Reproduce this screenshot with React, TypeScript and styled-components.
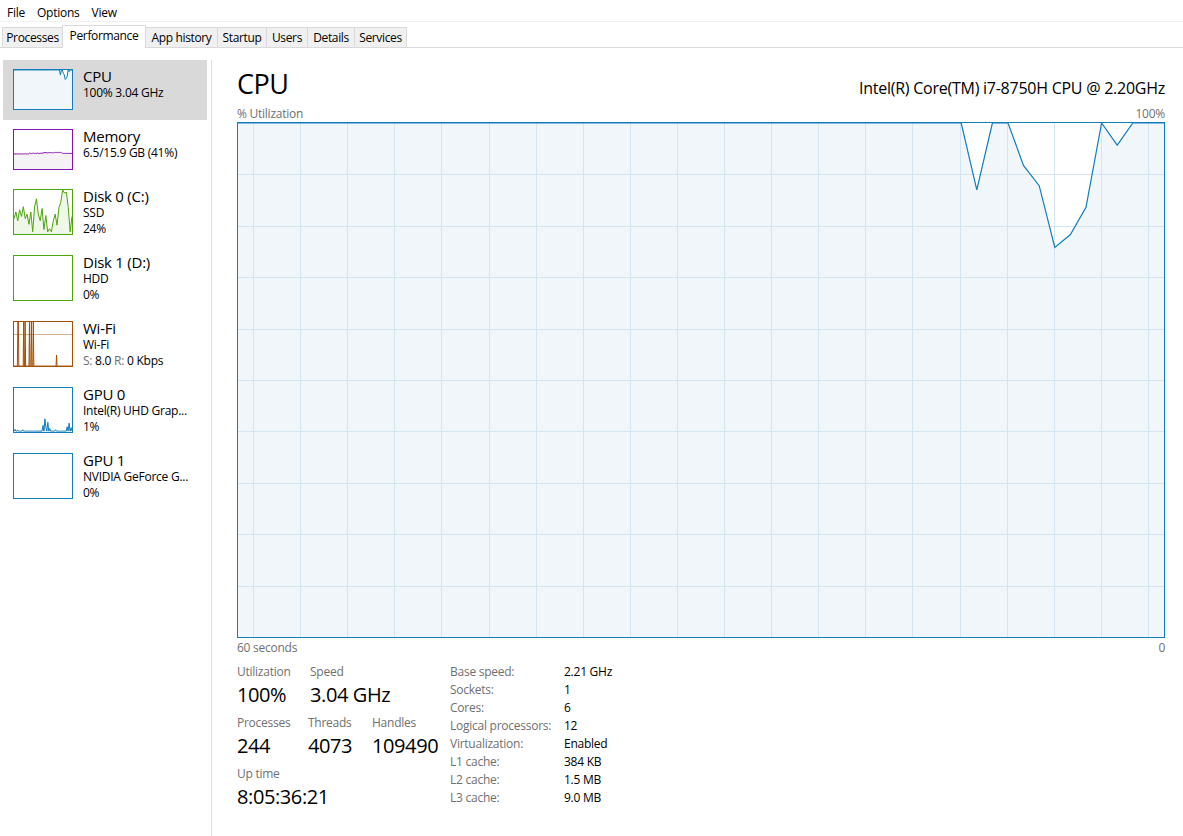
import React from "react";
import styled, { createGlobalStyle } from "styled-components";

const FONT = `"Segoe UI", "Open Sans", "Noto Sans", sans-serif`;

const GlobalStyle = createGlobalStyle`
  html, body { margin: 0; padding: 0; background: #fff; }
  body { font-family: ${FONT}; color: #000; letter-spacing: -0.25px; }
  * { box-sizing: border-box; }
`;

type Palette = { border: string; fill: string; line: string };

const BLUE: Palette = { border: "#117dbb", fill: "#f1f6fa", line: "#117dbb" };
const PURPLE: Palette = { border: "#8b12ae", fill: "#f4f2f4", line: "#8b12ae" };
const GREEN: Palette = { border: "#4da60c", fill: "#eff7e9", line: "#4da60c" };
const ORANGE: Palette = { border: "#a74f01", fill: "#fcf3eb", line: "#a74f01" };

// ---- data ----

const cpuVals = (() => {
  const v = new Array(61).fill(1);
  const dips: Record<number, number> = { 3: 0.957, 5: 0.836, 6: 0.783, 7: 0.758, 8: 0.878, 9: 0.917, 12: 0.87 };
  Object.entries(dips).forEach(([k, val]) => (v[60 - Number(k)] = val));
  return v;
})();

const memVals = Array.from({ length: 61 }, (_, i) => {
  if (i < 16) return 0.385 + (i % 3 === 0 ? 0.005 : 0);
  if (i < 30) return 0.4 + (i % 4 === 0 ? 0.01 : 0);
  if (i < 42) return 0.42 - (i % 5 === 0 ? 0.01 : 0);
  if (i < 50) return 0.425;
  return 0.4;
});

const disk0Vals = [
  0.35, 0.5, 0.3, 0.55, 0.4, 0.62, 0.35, 0.45, 0.22, 0.5, 0.05, 0.62, 0.8, 0.45, 0.3, 0.58, 0.1, 0.42, 0.05,
  0.12, 0.05, 0.3, 0.45, 0.2, 0.6, 0.72, 1.0, 0.93, 0.95, 0.6, 0.05, 0.4,
];

const wifiVals = Array.from({ length: 121 }, (_, i) => {
  const spikes: Record<number, number> = { 8: 1, 9: 1, 20: 1, 23: 1, 32: 1, 36: 1, 40: 1, 88: 0.25 };
  return spikes[i] ?? 0;
});

const gpu0Vals = Array.from({ length: 61 }, (_, i) => {
  const spikes: Record<number, number> = {
    1: 0.06, 4: 0.04, 9: 0.05, 30: 0.15, 32: 0.3, 33: 0.1, 35: 0.22, 37: 0.08, 43: 0.05, 55: 0.12, 57: 0.2, 59: 0.1,
  };
  return spikes[i] ?? 0.02;
});

// ---- graph helpers ----

function toPoints(vals: number[], w: number, h: number, step?: number) {
  const n = vals.length;
  const dx = step ?? w / (n - 1);
  return vals.map((v, i) => [w - (n - 1 - i) * dx, h - v * h] as [number, number]);
}

function Spark({ vals, w, h, pal, guide }: { vals: number[]; w: number; h: number; pal: Palette; guide?: number }) {
  const pts = toPoints(vals, w, h);
  const line = pts.map((p) => p.join(",")).join(" ");
  return (
    <svg width={w} height={h} viewBox={`0 0 ${w} ${h}`}>
      <polygon points={`${line} ${w},${h} ${pts[0][0]},${h}`} fill={pal.fill} />
      {guide !== undefined && (
        <line x1={0} x2={w} y1={Math.round(h - guide * h) + 0.5} y2={Math.round(h - guide * h) + 0.5} stroke={pal.line} strokeOpacity={0.45} strokeWidth={1} />
      )}
      <polyline points={line} fill="none" stroke={pal.line} strokeWidth={1} />
    </svg>
  );
}

// ---- window chrome ----

const Window = styled.div`
  width: 1183px;
  height: 836px;
  display: flex;
  flex-direction: column;
  overflow: hidden;
  background: #fff;
`;

const MenuBar = styled.div`
  height: 22px;
  display: flex;
  align-items: flex-start;
  padding: 5px 0 0 1px;
  border-bottom: 1px solid #f0f0f0;
  font-size: 12px;
  line-height: 16px;
`;

const MenuItem = styled.span`
  padding: 0 6px;
`;

const TabStrip = styled.div`
  height: 26px;
  display: flex;
  align-items: flex-end;
  padding-left: 2px;
  border-bottom: 1px solid #d9d9d9;
`;

const Tab = styled.div<{ $w: number; $active?: boolean }>`
  width: ${(p) => p.$w}px;
  height: ${(p) => (p.$active ? 23 : 20)}px;
  margin-bottom: ${(p) => (p.$active ? -1 : 0)}px;
  margin-left: -1px;
  &:first-child { margin-left: 0; }
  padding-top: ${(p) => (p.$active ? 2 : 2)}px;
  border: 1px solid #d9d9d9;
  border-bottom: ${(p) => (p.$active ? "none" : "1px solid transparent")};
  background: ${(p) => (p.$active ? "#fff" : "#f0f0f0")};
  position: relative;
  z-index: ${(p) => (p.$active ? 1 : 0)};
  font-size: 12px;
  line-height: 16px;
  letter-spacing: -0.35px;
  text-align: center;
  white-space: nowrap;
`;

const Body = styled.div`
  flex: 1;
  display: flex;
  min-height: 0;
`;

// ---- sidebar ----

const Sidebar = styled.div`
  width: 212px;
  margin-top: 12px;
  padding-left: 3px;
  border-right: 1px solid #e0e0e0;
  flex: none;
`;

const Item = styled.div<{ $h: number; $selected?: boolean }>`
  width: 204px;
  height: ${(p) => p.$h}px;
  display: flex;
  align-items: flex-start;
  gap: 10px;
  padding: 9px 0 0 10px;
  background: ${(p) => (p.$selected ? "#d9d9d9" : "transparent")};
`;

const Thumb = styled.div<{ $color: string; $h: number }>`
  width: 60px;
  height: ${(p) => p.$h}px;
  border: 1px solid ${(p) => p.$color};
  flex: none;
  background: #fff;
  overflow: hidden;
  svg { display: block; }
`;

const ItemText = styled.div`
  margin-top: -2px;
  min-width: 0;
`;

const ItemTitle = styled.div`
  font-size: 15px;
  line-height: 18px;
`;

const ItemSub = styled.div`
  font-size: 12px;
  line-height: 15.5px;
  white-space: nowrap;
`;

const Dim = styled.span`
  color: #707070;
`;

// ---- main panel ----

const Main = styled.div`
  flex: 1;
  min-width: 0;
  padding: 18px 18px 0 25px;
  display: flex;
  flex-direction: column;
`;

const Header = styled.div`
  display: flex;
  justify-content: space-between;
  align-items: baseline;
`;

const Title = styled.div`
  font-size: 27px;
  line-height: 36px;
  letter-spacing: -0.5px;
`;

const Model = styled.div`
  font-size: 16px;
  line-height: 20px;
`;

const AxisRow = styled.div<{ $mt: number }>`
  display: flex;
  justify-content: space-between;
  margin-top: ${(p) => p.$mt}px;
  font-size: 12px;
  line-height: 16px;
  color: #707070;
`;

const Chart = styled.div`
  height: 516px;
  border: 1px solid #117dbb;
  background: #fff;
  overflow: hidden;
  svg { display: block; }
`;

const Stats = styled.div`
  margin-top: 8px;
  display: flex;
`;

const LeftStats = styled.div`
  width: 213px;
  display: flex;
  flex-direction: column;
  gap: 7px;
`;

const StatRow = styled.div`
  display: flex;
`;

const Stat = styled.div<{ $w?: number }>`
  width: ${(p) => (p.$w ? `${p.$w}px` : "auto")};
  display: flex;
  flex-direction: column;
  gap: 2px;
`;

const StatLabel = styled.div`
  font-size: 12px;
  line-height: 16px;
  color: #707070;
`;

const StatValue = styled.div`
  font-size: 20px;
  line-height: 26px;
  letter-spacing: -0.4px;
`;

const InfoTable = styled.div`
  display: grid;
  grid-template-columns: 114px auto;
  grid-auto-rows: 18px;
  margin-top: -1px;
  font-size: 12px;
  line-height: 18px;
`;

const InfoLabel = styled.div`
  color: #707070;
`;

const InfoValue = styled.div``;

// ---- main chart ----

const CW = 926;
const CH = 514;

function CpuChart() {
  const pts = toPoints(cpuVals, CW, CH, 15.6);
  const line = pts.map((p) => p.join(",")).join(" ");
  const vx = Array.from({ length: 20 }, (_, j) => Math.round(15 + 47.1 * j) + 0.5);
  const hy = Array.from({ length: 9 }, (_, i) => Math.round(51.4 * (i + 1)) + 0.5);
  return (
    <svg width={CW} height={CH} viewBox={`0 0 ${CW} ${CH}`}>
      <polygon points={`${line} ${CW},${CH} ${pts[0][0]},${CH}`} fill={BLUE.fill} />
      {vx.map((x) => (
        <line key={`v${x}`} x1={x} y1={0} x2={x} y2={CH} stroke="#d3e5f1" strokeWidth={1} />
      ))}
      {hy.map((y) => (
        <line key={`h${y}`} x1={0} y1={y} x2={CW} y2={y} stroke="#d3e5f1" strokeWidth={1} />
      ))}
      <polyline points={line} fill="none" stroke={BLUE.line} strokeWidth={1.2} />
    </svg>
  );
}

// ---- sidebar config ----

type Device = {
  title: string;
  lines: React.ReactNode[];
  pal: Palette;
  vals?: number[];
  guide?: number;
  tall?: boolean;
  selected?: boolean;
};

const devices: Device[] = [
  { title: "CPU", lines: ["100% 3.04 GHz"], pal: BLUE, vals: cpuVals, selected: true },
  { title: "Memory", lines: ["6.5/15.9 GB (41%)"], pal: PURPLE, vals: memVals },
  { title: "Disk 0 (C:)", lines: ["SSD", "24%"], pal: GREEN, vals: disk0Vals, tall: true },
  { title: "Disk 1 (D:)", lines: ["HDD", "0%"], pal: GREEN, tall: true },
  {
    title: "Wi-Fi",
    lines: [
      "Wi-Fi",
      <>
        <Dim>S:</Dim> 8.0 <Dim>R:</Dim> 0 Kbps
      </>,
    ],
    pal: ORANGE,
    vals: wifiVals,
    guide: 0.72,
    tall: true,
  },
  { title: "GPU 0", lines: ["Intel(R) UHD Grap...", "1%"], pal: BLUE, vals: gpu0Vals, tall: true },
  { title: "GPU 1", lines: ["NVIDIA GeForce G...", "0%"], pal: BLUE, tall: true },
];

const tabs: [string, number][] = [
  ["Processes", 61],
  ["Performance", 84],
  ["App history", 73],
  ["Startup", 50],
  ["Users", 42],
  ["Details", 48],
  ["Services", 53],
];

const info: [string, string][] = [
  ["Base speed:", "2.21 GHz"],
  ["Sockets:", "1"],
  ["Cores:", "6"],
  ["Logical processors:", "12"],
  ["Virtualization:", "Enabled"],
  ["L1 cache:", "384 KB"],
  ["L2 cache:", "1.5 MB"],
  ["L3 cache:", "9.0 MB"],
];

export default function App() {
  return (
    <Window>
      <GlobalStyle />
      <MenuBar>
        <MenuItem>File</MenuItem>
        <MenuItem>Options</MenuItem>
        <MenuItem>View</MenuItem>
      </MenuBar>
      <TabStrip>
        {tabs.map(([name, w]) => (
          <Tab key={name} $w={w} $active={name === "Performance"}>
            {name}
          </Tab>
        ))}
      </TabStrip>
      <Body>
        <Sidebar>
          {devices.map((d) => {
            const th = d.tall ? 46 : 41;
            return (
              <Item key={d.title} $h={d.tall ? 66 : 60} $selected={d.selected}>
                <Thumb $color={d.pal.border} $h={th}>
                  {d.vals && <Spark vals={d.vals} w={58} h={th - 2} pal={d.pal} guide={d.guide} />}
                </Thumb>
                <ItemText>
                  <ItemTitle>{d.title}</ItemTitle>
                  {d.lines.map((l, i) => (
                    <ItemSub key={i}>{l}</ItemSub>
                  ))}
                </ItemText>
              </Item>
            );
          })}
        </Sidebar>
        <Main>
          <Header>
            <Title>CPU</Title>
            <Model>Intel(R) Core(TM) i7-8750H CPU @ 2.20GHz</Model>
          </Header>
          <AxisRow $mt={4}>
            <span>% Utilization</span>
            <span>100%</span>
          </AxisRow>
          <Chart>
            <CpuChart />
          </Chart>
          <AxisRow $mt={2}>
            <span>60 seconds</span>
            <span>0</span>
          </AxisRow>
          <Stats>
            <LeftStats>
              <StatRow>
                <Stat $w={73}>
                  <StatLabel>Utilization</StatLabel>
                  <StatValue>100%</StatValue>
                </Stat>
                <Stat>
                  <StatLabel>Speed</StatLabel>
                  <StatValue>3.04 GHz</StatValue>
                </Stat>
              </StatRow>
              <StatRow>
                <Stat $w={71}>
                  <StatLabel>Processes</StatLabel>
                  <StatValue>244</StatValue>
                </Stat>
                <Stat $w={64}>
                  <StatLabel>Threads</StatLabel>
                  <StatValue>4073</StatValue>
                </Stat>
                <Stat>
                  <StatLabel>Handles</StatLabel>
                  <StatValue>109490</StatValue>
                </Stat>
              </StatRow>
              <StatRow>
                <Stat>
                  <StatLabel>Up time</StatLabel>
                  <StatValue>8:05:36:21</StatValue>
                </Stat>
              </StatRow>
            </LeftStats>
            <InfoTable>
              {info.map(([k, v]) => (
                <React.Fragment key={k}>
                  <InfoLabel>{k}</InfoLabel>
                  <InfoValue>{v}</InfoValue>
                </React.Fragment>
              ))}
            </InfoTable>
          </Stats>
        </Main>
      </Body>
    </Window>
  );
}
